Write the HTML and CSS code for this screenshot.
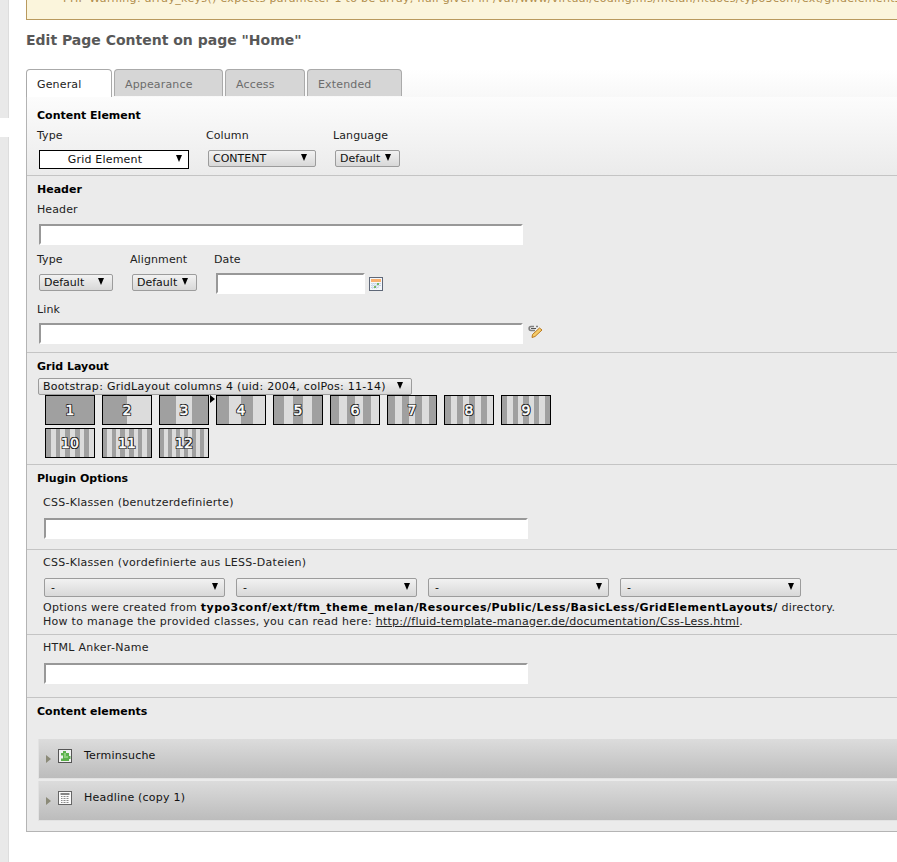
FILE: index.html
```html
<!DOCTYPE html>
<html lang="en">
<head>
<meta charset="utf-8">
<title>Edit Page Content</title>
<link rel="stylesheet" href="styles.css">
</head>
<body>
<div class="sidebar"><div class="side-a"></div><div class="side-b"></div></div>
<main class="main">
  <div class="warning"><span>PHP Warning: array_keys() expects parameter 1 to be array, null given in /var/www/virtual/coding.ms/melan/htdocs/typo3conf/ext/gridelements/Classes/Backend/ItemsProcFuncs/ColPosList.php line 84</span></div>
  <h1 class="title">Edit Page Content on page "Home"</h1>
  <div class="tabs">
    <div class="tab active w1">General</div>
    <div class="tab w2">Appearance</div>
    <div class="tab w3">Access</div>
    <div class="tab w4">Extended</div>
  </div>
  <div class="panel">
    <section class="sec sec-content">
      <h2 class="head">Content Element</h2>
      <div class="row">
        <div class="field f-type"><label class="lbl">Type</label><div class="sel sel-black"><span class="center">Grid Element</span><i class="arrow"></i></div></div>
        <div class="field f-col"><label class="lbl">Column</label><div class="sel sel-col"><span>CONTENT</span><i class="arrow"></i></div></div>
        <div class="field"><label class="lbl">Language</label><div class="sel sel-lang"><span>Default</span><i class="arrow"></i></div></div>
      </div>
    </section>
    <section class="sec sec-header">
      <h2 class="head">Header</h2>
      <label class="lbl lbl-h">Header</label>
      <div class="input i-wide"></div>
      <div class="row row-2">
        <div class="field f-htype"><label class="lbl">Type</label><div class="sel sel-htype"><span>Default</span><i class="arrow"></i></div></div>
        <div class="field f-align"><label class="lbl">Alignment</label><div class="sel sel-align"><span>Default</span><i class="arrow"></i></div></div>
        <div class="field"><label class="lbl">Date</label>
          <div class="with-icon">
            <div class="input i-date"></div>
            <svg class="cal" width="14" height="14" viewBox="0 0 14 14"><rect x=".5" y=".5" width="13" height="13" fill="#f4f7fb" stroke="#5f6878"/><rect x="2" y="2" width="10" height="3" fill="#f8b070"/><path d="M2 6.500h10M2 8.500h10M2 10.500h8" stroke="#c4d2e6"/><path d="M3.500 6v6M5.500 6v6M7.500 6v6M9.500 6v5" stroke="#d6e0ee"/><rect x="8" y="6" width="2" height="2" fill="#74b868"/><rect x="5" y="9" width="2" height="2" fill="#74b868"/></svg>
          </div>
        </div>
      </div>
      <label class="lbl lbl-link">Link</label>
      <div class="with-icon">
        <div class="input i-wide i-link"></div>
        <svg class="link" width="16" height="13" viewBox="0 0 16 13"><path d="M6 1.500H3C.500 1.500.500 5.500 3 5.500h4" fill="none" stroke="#808080" stroke-width="1.600"/><path d="M3 3.500h5" stroke="#555"/><path d="M8 1.500h2" stroke="#808080" stroke-width="1.500"/><path d="M4.500 9.500 11.500 3l2.500 2-7 6.500-3 1z" fill="#f6cc68" stroke="#b9791f"/></svg>
      </div>
    </section>
    <section class="sec sec-grid">
      <h2 class="head">Grid Layout</h2>
      <div class="sel sel-grid"><span>Bootstrap: GridLayout columns 4 (uid: 2004, colPos: 11-14)</span><i class="arrow"></i></div>
      <div class="thumbs">
        <i class="marker"></i>
        <div class="thumb" style="--n:1"><span>1</span></div>
        <div class="thumb" style="--n:2"><span>2</span></div>
        <div class="thumb" style="--n:3"><span>3</span></div>
        <div class="thumb" style="--n:4"><span>4</span></div>
        <div class="thumb" style="--n:5"><span>5</span></div>
        <div class="thumb" style="--n:6"><span>6</span></div>
        <div class="thumb" style="--n:7"><span>7</span></div>
        <div class="thumb" style="--n:8"><span>8</span></div>
        <div class="thumb" style="--n:9"><span>9</span></div>
        <div class="thumb" style="--n:10"><span>10</span></div>
        <div class="thumb" style="--n:11"><span>11</span></div>
        <div class="thumb" style="--n:12"><span>12</span></div>
      </div>
    </section>
    <section class="sec sec-plugin">
      <h2 class="head">Plugin Options</h2>
      <div class="sub sub-1">
        <label class="lbl lbl-wide">CSS-Klassen (benutzerdefinierte)</label>
        <div class="input i-plugin"></div>
      </div>
      <div class="sub sub-2">
        <label class="lbl lbl-wide">CSS-Klassen (vordefinierte aus LESS-Dateien)</label>
        <div class="sel-row">
          <div class="sel sel-css"><span>-</span><i class="arrow"></i></div>
          <div class="sel sel-css"><span>-</span><i class="arrow"></i></div>
          <div class="sel sel-css"><span>-</span><i class="arrow"></i></div>
          <div class="sel sel-css"><span>-</span><i class="arrow"></i></div>
        </div>
        <p class="note">Options were created from <b>typo3conf/ext/ftm_theme_melan/Resources/Public/Less/BasicLess/GridElementLayouts/</b> directory.<br>How to manage the provided classes, you can read here: <a href="#">http://fluid-template-manager.de/documentation/Css-Less.html</a>.</p>
      </div>
      <div class="sub sub-3">
        <label class="lbl lbl-wide">HTML Anker-Name</label>
        <div class="input i-plugin"></div>
      </div>
    </section>
    <section class="sec sec-elements">
      <h2 class="head">Content elements</h2>
      <div class="item item-1">
        <i class="tri"></i>
        <svg class="ico" width="14" height="14" viewBox="0 0 14 14"><rect x=".5" y=".5" width="13" height="13" fill="#f2f2f2" stroke="#555"/><path d="M5 2h3v2h3v3h1.500v3H11v2H3V9.500h2V6.500H3V4h2z" fill="#5cb04c"/><path d="M6 4h2v3h2v2H6z" fill="#8ed07e"/></svg>
        <span class="item-t">Terminsuche</span>
      </div>
      <div class="item item-2">
        <i class="tri"></i>
        <svg class="ico" width="14" height="14" viewBox="0 0 14 14"><rect x=".5" y=".5" width="13" height="13" fill="#fafafa" stroke="#666"/><path d="M2.500 3h9" stroke="#666" stroke-width="1.600"/><path d="M3 5.500h8M3 7.500h8M3 9.500h8M3 11.500h8" stroke="#8a8a8a" stroke-dasharray="1 .5"/></svg>
        <span class="item-t">Headline (copy 1)</span>
      </div>
    </section>
  </div>
</main>
</body>
</html>
```
FILE: styles.css
```css
html, body { margin: 0; padding: 0; height: 862px; overflow: hidden; background: #fff; }
body { display: flex; font: 11px/14px "DejaVu Sans", Verdana, sans-serif; color: #000; }
.sidebar { width: 9px; flex: none; display: flex; flex-direction: column; }
.side-a { height: 118px; background: #e9e9e9; border-right: 1px solid #ddd; }
.side-b { flex: 1; margin-top: 19px; background: #e9e9e9; border-right: 1px solid #ddd; }
.main { flex: 1; min-width: 0; padding-left: 17px; overflow: hidden; }

.warning { height: 6px; display: flex; align-items: flex-end; padding: 0 0 13px 36px; background: #fbf5dc; border: 1px solid #b99a5e; border-width: 0 0 1px 1px; color: #b08d4c; letter-spacing: .33px; white-space: nowrap; overflow: hidden; margin-right: -60px; }
.warning span { display: block; flex: none; }
.title { margin: 11px 0 0; font-size: 14px; line-height: 18px; font-weight: bold; color: #585858; }

.tabs { margin-top: 20px; display: flex; gap: 2px; position: relative; z-index: 1; height: 28px; background: linear-gradient(#fff, #f8f8f8); }
.tab { box-sizing: border-box; height: 27px; padding: 8px 0 0 10px; background: #d6d6d6; border: 1px solid #aaa; border-bottom: 0; border-radius: 4px 4px 0 0; color: #6c6c6c; letter-spacing: .15px; }
.tab.active { height: 28px; background: #fff; color: #222; }
.w1 { width: 86px; } .w2 { width: 109px; } .w3 { width: 80px; } .w4 { width: 95px; }

.panel { border-left: 1px solid #b4b4b4; border-top: 1px solid #aaa; border-bottom: 1px solid #b4b4b4; background: #ebebeb; margin-top: -1px; }
.sec { padding: 7px 0 0 10px; border-bottom: 1px solid #c4c4c4; box-sizing: border-box; }
.sec:last-child { border-bottom: 0; }
.head { margin: 0; font-size: 11px; line-height: 14px; font-weight: bold; color: #000; }
.lbl { display: block; line-height: 14px; color: #222; letter-spacing: .1px; }
.lbl-wide { letter-spacing: .28px; }
.row { display: flex; }
.field { display: flex; flex-direction: column; align-items: flex-start; }

.sel { box-sizing: border-box; display: flex; align-items: center; justify-content: space-between; height: 17px; padding: 0 8px 0 4px; border: 1px solid #9c9c9c; border-radius: 2px; background: linear-gradient(#f2f2f2, #d8d8d8); color: #111; white-space: nowrap; }
.arrow { flex: none; width: 0; height: 0; border: 3.500px solid transparent; border-top: 7px solid #000; border-bottom: 0; margin-top: -3px; }
.center { flex: 1; text-align: center; padding-right: 6px; letter-spacing: .2px; }

.sec-content { height: 79px; background: linear-gradient(#fcfcfc, #ebebeb); padding-top: 12px; }
.sec-content .lbl { margin-top: 6px; }
.f-type { width: 169px; }
.f-col { width: 127px; }
.sel-black { width: 150px; height: 19px; margin: 7px 0 0 2px; border: 1px solid #000; border-radius: 0; background: #fff; padding: 0 6px 0 0; }
.sel-col { width: 108px; margin: 7px 0 0 2px; }
.sel-lang { width: 65px; margin: 7px 0 0 2px; }

.sec-header { height: 177px; }
.lbl-h { margin-top: 6px; }
.input { box-sizing: border-box; height: 21px; background: #fff; border: 2px solid #fff; border-top-color: #989898; border-left-color: #989898; }
.i-wide { width: 484px; margin: 7px 0 0 2px; }
.i-link { margin-top: 6px; }
.row-2 { margin-top: 8px; }
.f-htype { width: 93px; }
.f-align { width: 84px; }
.sel-htype { width: 74px; margin: 7px 0 0 2px; }
.sel-align { width: 65px; margin: 7px 0 0 2px; }
.with-icon { display: flex; align-items: center; }
.i-date { width: 149px; margin: 6px 0 0 2px; }
.cal { margin: 7px 0 0 4px; }
.lbl-link { margin-top: 9px; }
.link { margin: 2px 0 0 5px; }

.sec-grid { height: 112px; }
.sel-grid { width: 374px; margin: 4px 0 0 1px; letter-spacing: .28px; }
.thumbs { position: relative; display: grid; grid-template-columns: repeat(9, 50px); gap: 3px 7px; margin: 0 0 0 8px; }
.thumb { box-sizing: border-box; height: 30px; border: 1px solid #000; display: flex; align-items: center; justify-content: center; background: repeating-linear-gradient(90deg, #a0a0a0 0 calc(100% / var(--n)), #dcdcdc calc(100% / var(--n)) calc(200% / var(--n))); }
.thumb span { font-size: 14px; color: #fff; -webkit-text-stroke: .5px #fff; text-shadow: 1px 0 0 #222, -1px 0 0 #222, 0 1px 0 #222, 0 -1px 0 #222, 1px 1px 0 #222, -1px -1px 0 #222, 1px -1px 0 #222, -1px 1px 0 #222; }
.marker { position: absolute; left: 165px; top: 0; width: 0; height: 0; border: 4px solid transparent; border-left: 5px solid #000; border-right: 0; }

.sec-plugin { height: 233px; padding: 7px 0 0; }
.sec-plugin .head { margin-left: 10px; }
.sub { padding-left: 16px; border-bottom: 1px solid #c4c4c4; box-sizing: border-box; }
.sub:last-child { border-bottom: 0; }
.sub-1 { height: 64px; padding-top: 10px; }
.sub-2 { height: 85px; padding-top: 6px; }
.sub-3 { height: 63px; padding-top: 6px; }
.i-plugin { width: 484px; margin: 8px 0 0 1px; }
.sel-row { display: flex; gap: 11px; margin: 8px 0 0 1px; }
.sel-css { width: 181px; height: 19px; padding: 0 6px; }
.note { margin: 4px 0 0; line-height: 14px; color: #222; white-space: nowrap; letter-spacing: .27px; }
.note b { color: #000; letter-spacing: .47px; }
.note a { color: #222; text-decoration: underline; }

.sec-elements { height: 133px; padding: 7px 0 0 11px; }
.sec-elements .head { margin-left: -1px; }
.item { height: 40px; display: flex; align-items: flex-start; background: linear-gradient(#dcdcdc, #bcbcbc); border-bottom: 1px solid #e2e2e2; border-left: 1px solid #e2e2e2; box-sizing: border-box; }
.item-1 { margin-top: 20px; }
.item-2 { margin-top: 2px; }
.tri { width: 0; height: 0; margin: 16px 0 0 7px; border: 4px solid transparent; border-left: 5px solid #8b8a78; border-right: 0; }
.ico { margin: 10px 0 0 7px; flex: none; }
.item-t { margin: 10px 0 0 12px; color: #111; letter-spacing: .22px; }
```
